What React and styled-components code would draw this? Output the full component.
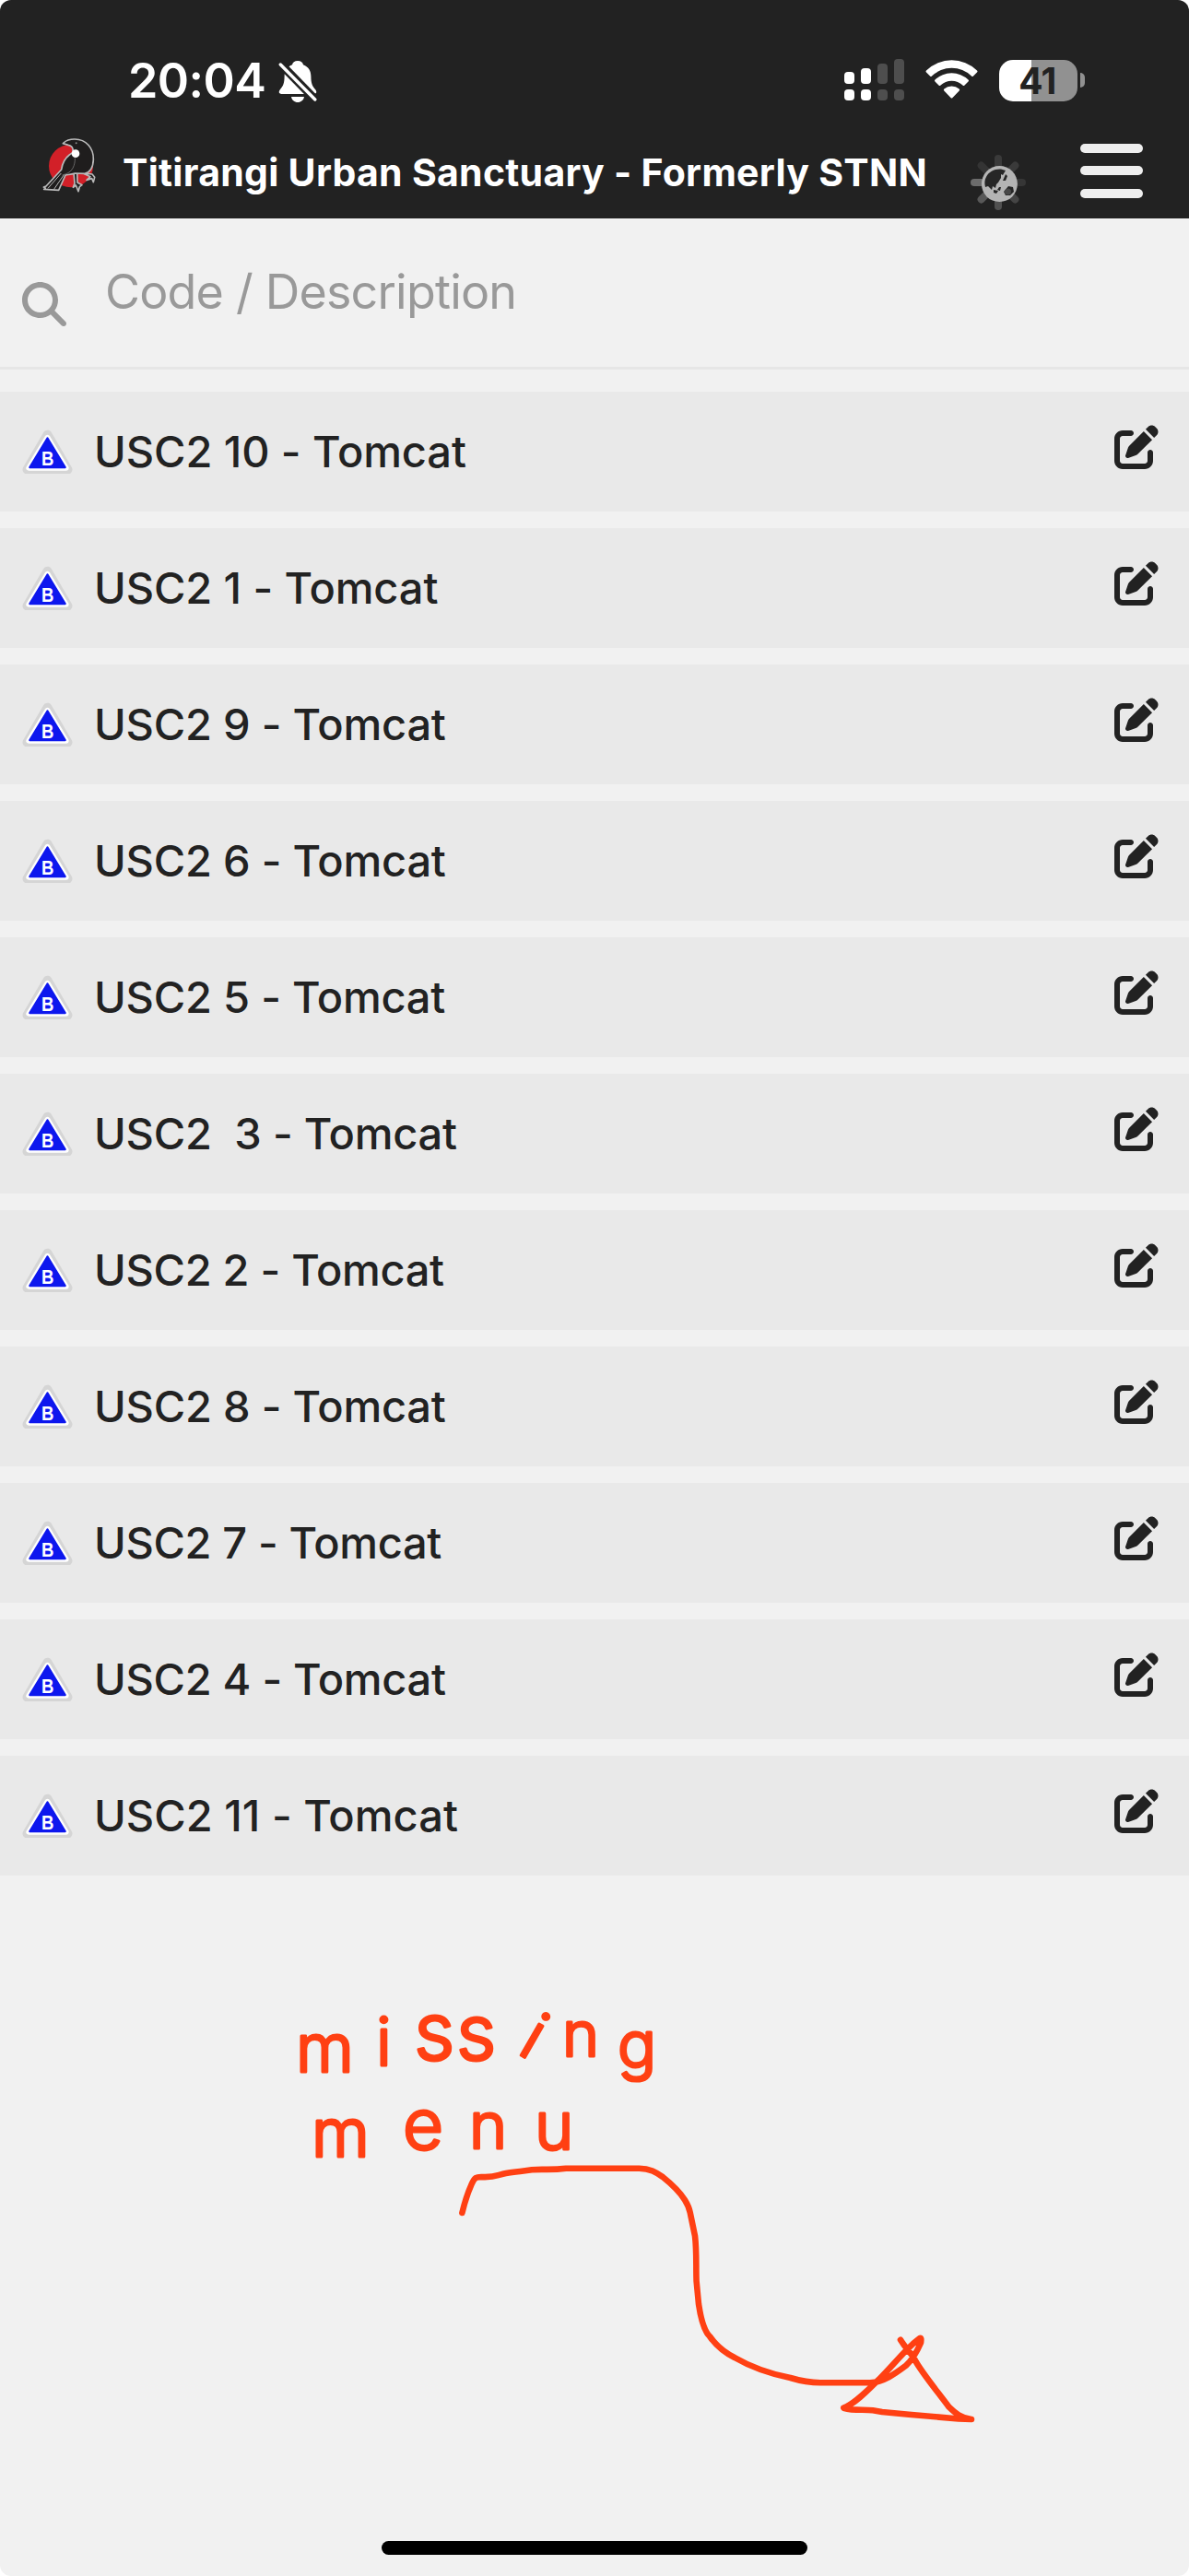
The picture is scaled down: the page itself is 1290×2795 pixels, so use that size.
import React from "react";
import styled, { createGlobalStyle } from "styled-components";
import { FaMagnifyingGlass, FaPenToSquare } from "react-icons/fa6";

const GlobalStyle = createGlobalStyle`
  body {
    margin: 0;
    background: #ffffff;
    font-family: Inter, "Liberation Sans", sans-serif;
  }
`;

const Screen = styled.div`
  position: relative;
  display: flex;
  flex-direction: column;
  width: 1290px;
  height: 2795px;
  overflow: hidden;
  box-sizing: border-box;
  background-color: #f1f1f1;
  border-radius: 12px;
`;

const Header = styled.header`
  height: 237px;
  box-sizing: border-box;
  background-color: #222222;
  color: #ffffff;
`;

const StatusBar = styled.div`
  display: flex;
  align-items: center;
  justify-content: space-between;
  height: 46px;
  padding: 64px 113px 0 139px;
`;

const Clock = styled.div`
  display: flex;
  align-items: center;
  gap: 14px;
  font-size: 52px;
  font-weight: 600;
  line-height: 48px;
  letter-spacing: -0.6px;
  padding-top: 2px;
`;

const StatusIcons = styled.div`
  display: flex;
  align-items: center;
  height: 46px;
`;

const Signal = styled.svg`
  width: 65px;
  height: 46px;
  margin-right: 23px;
`;

const Wifi = styled.svg`
  width: 57px;
  height: 46px;
  margin-right: 23px;
`;

const Battery = styled.div`
  display: flex;
  align-items: center;
  justify-content: center;
  width: 85px;
  height: 45px;
  padding-right: 2px;
  box-sizing: border-box;
  border-radius: 15px;
  background: linear-gradient(to right, #ffffff 35px, #919191 35px);
  color: #222222;
  font-size: 39px;
  font-weight: 700;
  letter-spacing: -0.5px;
`;

const BatteryTip = styled.div`
  width: 5px;
  height: 16px;
  margin-left: 3px;
  border-radius: 0 5px 5px 0;
  background-color: #919191;
`;

const TitleBar = styled.div`
  display: flex;
  align-items: flex-start;
  height: 127px;
  padding-left: 46px;
`;

const Logo = styled.svg`
  width: 58px;
  height: 60px;
  margin-top: 39px;
`;

const Title = styled.h1`
  width: 873px;
  margin: 57px 46px 0 29px;
  font-size: 41px;
  font-weight: 700;
  line-height: 40px;
  white-space: nowrap;
  letter-spacing: 0.28px;
`;

const ThemeIcon = styled.svg`
  width: 62px;
  height: 62px;
  margin-top: 57px;
`;

const Burger = styled.div`
  display: flex;
  flex-direction: column;
  gap: 14.3px;
  width: 68px;
  margin: 46px 0 0 58px;
`;

const BurgerLine = styled.span`
  height: 10px;
  border-radius: 5px;
  background-color: #eeeeee;
`;

const SearchBar = styled.div`
  display: flex;
  align-items: flex-start;
  height: 164px;
  padding-left: 24px;
  box-sizing: border-box;
  border-bottom: 3px solid #e6e6e6;
  color: #999999;

  svg {
    width: 48px;
    height: 48px;
    margin-top: 69px;
  }
`;

const Placeholder = styled.div`
  margin: 52px 0 0 42px;
  font-size: 52px;
  line-height: 56px;
  letter-spacing: -0.8px;
`;

const List = styled.div`
  display: flex;
  flex-direction: column;
  gap: 18px;
  padding-top: 24px;
`;

const Row = styled.div`
  display: flex;
  align-items: center;
  height: 130px;
  padding: 0 33px 0 24px;
  box-sizing: border-box;
  background-color: #e9e9e9;
  color: #222222;
`;

const Badge = styled.svg`
  width: 55px;
  height: 48px;
`;

const Label = styled.div`
  flex: 1;
  margin-left: 23px;
  font-size: 47px;
  font-weight: 500;
  line-height: 60px;
  white-space: pre;
  letter-spacing: ${(props) => props.$spacing || "-0.22px"};
`;

const EditIcon = styled(FaPenToSquare)`
  width: 48px;
  height: 48px;
  margin-bottom: 10px;
`;

// 메모 레이어
const Notes = styled.svg`
  position: absolute;
  left: 300px;
  top: 2140px;
  width: 800px;
  height: 510px;

  text {
    font-family: Inter, "DejaVu Sans", sans-serif;
    font-weight: 300;
    fill: #ff4013;
    stroke: #ff4013;
    stroke-width: 3;
    stroke-linejoin: round;
  }
`;

const HomeBar = styled.div`
  width: 462px;
  height: 15px;
  margin: auto auto 23px 414px;
  border-radius: 8px;
  background-color: #000000;
`;

const tunnels = [
  { name: "USC2 10 - Tomcat", spacing: "-0.08px" },
  { name: "USC2 1 - Tomcat", spacing: "-0.1px" },
  { name: "USC2 9 - Tomcat" },
  { name: "USC2 6 - Tomcat" },
  { name: "USC2 5 - Tomcat" },
  { name: "USC2  3 - Tomcat" },
  { name: "USC2 2 - Tomcat", spacing: "-0.3px" },
  { name: "USC2 8 - Tomcat" },
  { name: "USC2 7 - Tomcat", spacing: "-0.35px" },
  { name: "USC2 4 - Tomcat", spacing: "-0.3px" },
  { name: "USC2 11 - Tomcat", spacing: "0.04px" },
];

const rays = [
  { angle: 0, color: "#3a3a3a" },
  { angle: 45, color: "#3a3a3a" },
  { angle: 90, color: "#363636" },
  { angle: 135, color: "#454545" },
  { angle: 180, color: "#505050" },
  { angle: 225, color: "#585858" },
  { angle: 270, color: "#6c6c6c" },
  { angle: 315, color: "#343434" },
];

const bars = [
  { x: 0, top: 14, color: "#ffffff" },
  { x: 18, top: 10, color: "#ffffff" },
  { x: 36, top: 5, color: "#4e4e4e" },
  { x: 54, top: 0, color: "#4e4e4e" },
];

function MutedBell() {
  return (
    <svg width="42" height="46" viewBox="0 0 42 46" fill="#ffffff">
      <path d="M21 1c-3.500 0-5.500 2-6 4.200C9 7.500 6.600 12 6.600 18c0 8-1.800 10.500-4.600 14C-.3 34.800.7 37 3.500 37h35c2.800 0 3.800-2.200 1.500-5-2.800-3.500-4.600-6-4.600-14 0-6-2.400-10.500-8.400-12.800C26.500 3 24.500 1 21 1z" />
      <path d="M14 40h14c-.5 3.500-3.500 6-7 6s-6.500-2.500-7-6z" />
      <path d="M2.500 4.500l38 39" stroke="#222222" strokeWidth="9" />
      <path d="M2.300 5l37.500 38" stroke="#ffffff" strokeWidth="3.400" strokeLinecap="round" />
    </svg>
  );
}

function BirdLogo() {
  return (
    <Logo viewBox="48 42 174 180">
      <ellipse cx="141" cy="135" rx="72" ry="70" fill="#d22028" />
      <g fill="#1f1d1d" stroke="#b9b9b9" strokeWidth="5" strokeLinejoin="round">
        <path d="M150 158l3 34-5 13 9-7 8 20 4-15 8-6-15-8-1-34" />
        <path d="M176 157l28 13-12 11 17-5 5 12 4-16-8-10-30-4" />
        <path d="M117 60c8-8 20-12 36-12 38 0 62 30 61 66-1 28-12 42-28 46l-32-1c-13 5-24 4-31 6l-22 49-48-3 5-4-6-3 8-3 50-54c3-24 13-38 26-48l11-8c3-14-4-22-15-24l-17-5z" />
        <path d="M113 165l12-4c20-7 30-28 29-52" fill="none" stroke="#8a8a8a" strokeWidth="2" />
        <path d="M109 159l-43 49M118 164l-33 48" fill="none" strokeWidth="3" />
      </g>
      <circle cx="156" cy="95" r="13" fill="#ffffff" />
      <circle cx="158" cy="61" r="3" fill="#8a8a8a" />
    </Logo>
  );
}

function ThemeToggle() {
  return (
    <ThemeIcon viewBox="-31 -31 62 62">
      {rays.map((el) => (
        <path
          key={el.angle}
          d="M0-26v8"
          stroke={el.color}
          strokeWidth="8"
          strokeLinecap="round"
          transform={`rotate(${el.angle})`}
        />
      ))}
      <circle cx="1.400" cy="1.600" r="19.500" fill="#b4b4b4" />
      <path
        d="M-13-6C-10-12-4-15 3-14.500L8-13 5-8 3-9 3-5 0 0-2 2-3 6-6 4-7 8-11 4-14 5C-15 1-15-3-13-6zM8-9l2 2-2 5-3 0zM1 5l2 0-1 4-3-1zM-5 8l5 1-2 3-3-1zM6 10l5-6 5 1 1 5-4 4-5 0z"
        fill="#262626"
      />
      <circle cx="10.500" cy="10" r="3.500" fill="#474747" />
    </ThemeIcon>
  );
}

function TunnelBadge() {
  return (
    <Badge viewBox="42 48 164 142">
      <path
        d="M124 64L58 177H190z"
        fill="#d5d5d5"
        stroke="#d5d5d5"
        strokeWidth="29"
        strokeLinejoin="round"
      />
      <path
        d="M124 74L64 172H184z"
        fill="#0d17ee"
        stroke="#ffffff"
        strokeWidth="18"
        strokeLinejoin="round"
      />
      <path
        d="M124 76L67 170H181z"
        fill="#0d17ee"
        stroke="#0d17ee"
        strokeWidth="7"
        strokeLinejoin="round"
      />
      <text
        x="125"
        y="163"
        textAnchor="middle"
        textLength="40"
        lengthAdjust="spacingAndGlyphs"
        fontFamily="Liberation Sans, sans-serif"
        fontSize="67"
        fontWeight="700"
        fill="#ffffff"
      >
        B
      </text>
    </Badge>
  );
}

function App() {
  return (
    <>
      <GlobalStyle />
      <Screen>
        <Header>
          <StatusBar>
            <Clock>
              20:04
              <MutedBell />
            </Clock>
            <StatusIcons>
              <Signal viewBox="0 0 65 46">
                {bars.map((el) => (
                  <g key={el.x} fill={el.color}>
                    <rect x={el.x} y={el.top} width="11" height={27 - el.top} rx="4" />
                    <rect x={el.x} y="33" width="11" height="12" rx="4" />
                  </g>
                ))}
              </Signal>
              <Wifi viewBox="0 0 57 46" fill="#ffffff">
                <path d="M1 12.500a39.500 39.500 0 0 1 55 0q1 1 0 2l-4 4q-1 1-2 0a31 31 0 0 0-43 0q-1 1-2 0l-4-4q-1-1 0-2z" />
                <path d="M10.500 22.500a26 26 0 0 1 36 0q1 1 0 2l-4 4q-1 1-2 0a17.500 17.500 0 0 0-24 0q-1 1-2 0l-4-4q-1-1 0-2z" />
                <path d="M20.300 32.500a12.500 12.500 0 0 1 16.400 0q1 1 0 2l-7.200 7.600q-1 1-2 0l-7.200-7.600q-1-1 0-2z" />
              </Wifi>
              <Battery>41</Battery>
              <BatteryTip />
            </StatusIcons>
          </StatusBar>
          <TitleBar>
            <BirdLogo />
            <Title>Titirangi Urban Sanctuary - Formerly STNN</Title>
            <ThemeToggle />
            <Burger>
              <BurgerLine />
              <BurgerLine />
              <BurgerLine />
            </Burger>
          </TitleBar>
        </Header>
        <SearchBar>
          <FaMagnifyingGlass />
          <Placeholder>Code / Description</Placeholder>
        </SearchBar>
        <List>
          {tunnels.map((el) => (
            <Row key={el.name}>
              <TunnelBadge />
              <Label $spacing={el.spacing}>{el.name}</Label>
              <EditIcon />
            </Row>
          ))}
        </List>
        <Notes viewBox="300 2140 800 510">
          <text fontSize="72">
            <tspan x="321" y="2248">m</tspan>
            <tspan x="408" y="2241">i</tspan>
            <tspan x="449" y="2235" fontSize="86">s</tspan>
            <tspan x="495" y="2235" fontSize="84">s</tspan>
            <tspan x="560" y="2227" rotate="30">i</tspan>
            <tspan x="610" y="2231" fontSize="68">n</tspan>
            <tspan x="670" y="2243" fontSize="70">g</tspan>
          </text>
          <text fontSize="72">
            <tspan x="338" y="2340">m</tspan>
            <tspan x="437" y="2332" fontSize="76">e</tspan>
            <tspan x="509" y="2331" fontSize="70">n</tspan>
            <tspan x="580" y="2332" fontSize="72">u</tspan>
          </text>
          <path
            d="M501.400 2401C504 2390 508 2378 511.600 2370S517 2362 522 2362C537 2363 539 2360 549 2358S567 2356 577 2354.300C588 2353 597 2355 614 2352.700H693.500C705 2352.700 712 2357 719 2362C729 2370 738 2379 743 2387S748 2397 749 2402L754 2426C756 2443 755 2458 755.600 2475L758 2500Q762 2527 770 2535C777 2545 785 2552 797 2558C816 2569 837 2576 857.600 2580Q875 2585.300 890 2585.300H944C958 2585 972 2575 983 2566.700C990 2560 996 2549 999 2542Q1000 2536 998 2537C986 2545 972 2563 954.500 2580.700C944 2591 928 2608 915.300 2612.700C927 2616 937 2614 947 2615.300L957 2617 986 2619.700 1040 2624.500 1054 2625C1043 2624 1036 2618 1029.600 2611.700C1018 2596 1003 2578 994 2563C989 2553 984 2550 977 2538.700"
            fill="none"
            stroke="#ff4013"
            strokeWidth="6.600"
            strokeLinecap="round"
            strokeLinejoin="round"
          />
        </Notes>
        <HomeBar />
      </Screen>
    </>
  );
}

export default App;
